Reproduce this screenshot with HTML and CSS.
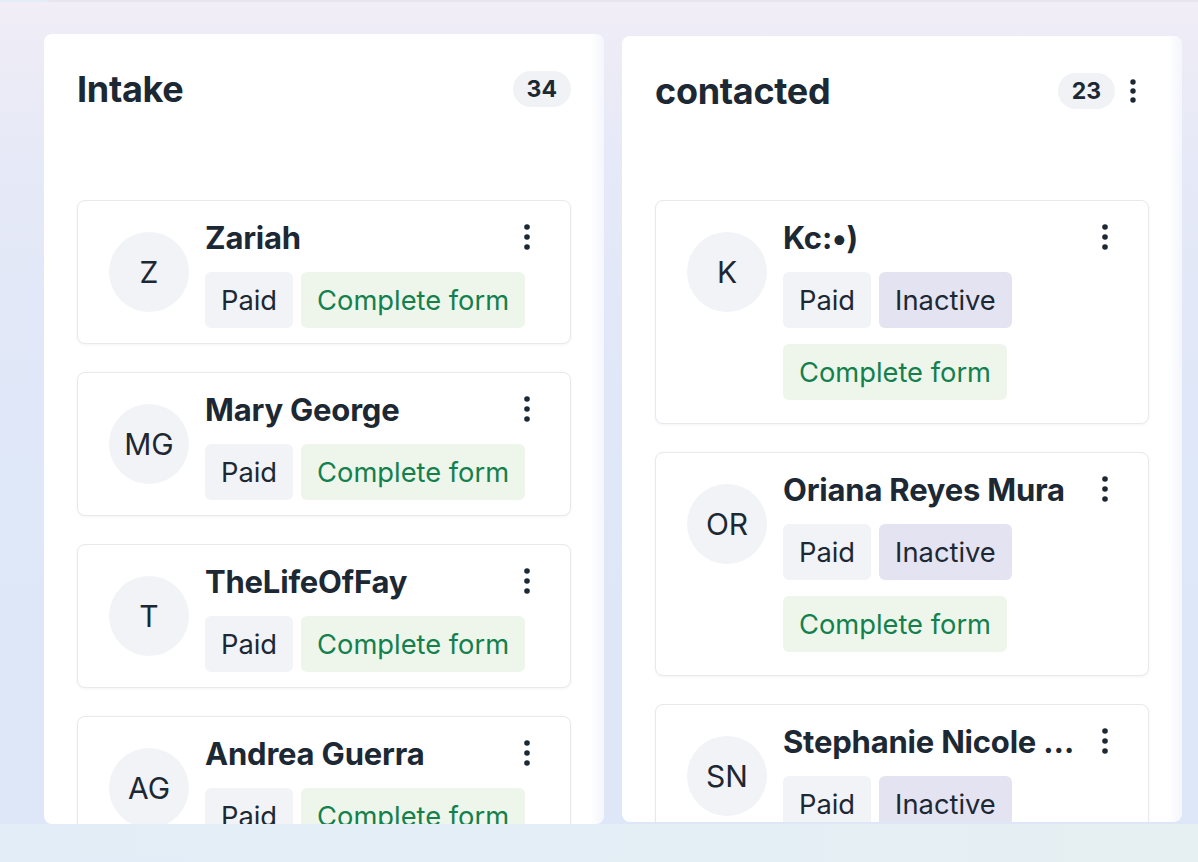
FILE: index.html
```html
<!DOCTYPE html>
<html lang="en">
<head>
<meta charset="utf-8">
<title>Board</title>
<link rel="stylesheet" href="styles.css">
</head>
<body>
<div class="topbar"></div>
<main class="board">
  <section class="col">
    <header class="col-head">
      <h2 class="col-title">Intake</h2>
      <span class="count">34</span>
    </header>
    <div class="cards">
      <article class="card">
        <div class="avatar">Z</div>
        <div class="info">
          <div class="name-row"><span class="name">Zariah</span>
            <svg class="kebab" viewBox="0 0 24 26"><circle cx="12" cy="3" r="2.8"/><circle cx="12" cy="13" r="2.8"/><circle cx="12" cy="23" r="2.8"/></svg></div>
          <div class="tags"><span class="tag tag-paid">Paid</span><span class="tag tag-form">Complete form</span></div>
        </div>
      </article>
      <article class="card">
        <div class="avatar">MG</div>
        <div class="info">
          <div class="name-row"><span class="name">Mary George</span>
            <svg class="kebab" viewBox="0 0 24 26"><circle cx="12" cy="3" r="2.8"/><circle cx="12" cy="13" r="2.8"/><circle cx="12" cy="23" r="2.8"/></svg></div>
          <div class="tags"><span class="tag tag-paid">Paid</span><span class="tag tag-form">Complete form</span></div>
        </div>
      </article>
      <article class="card">
        <div class="avatar">T</div>
        <div class="info">
          <div class="name-row"><span class="name">TheLifeOfFay</span>
            <svg class="kebab" viewBox="0 0 24 26"><circle cx="12" cy="3" r="2.8"/><circle cx="12" cy="13" r="2.8"/><circle cx="12" cy="23" r="2.8"/></svg></div>
          <div class="tags"><span class="tag tag-paid">Paid</span><span class="tag tag-form">Complete form</span></div>
        </div>
      </article>
      <article class="card">
        <div class="avatar">AG</div>
        <div class="info">
          <div class="name-row"><span class="name">Andrea Guerra</span>
            <svg class="kebab" viewBox="0 0 24 26"><circle cx="12" cy="3" r="2.8"/><circle cx="12" cy="13" r="2.8"/><circle cx="12" cy="23" r="2.8"/></svg></div>
          <div class="tags"><span class="tag tag-paid">Paid</span><span class="tag tag-form">Complete form</span></div>
        </div>
      </article>
    </div>
  </section>

  <section class="col col-shifted">
    <header class="col-head">
      <h2 class="col-title">contacted</h2>
      <span class="count">23</span>
      <svg class="col-kebab" viewBox="0 0 32 24"><circle cx="16" cy="3" r="2.7"/><circle cx="16" cy="12" r="2.7"/><circle cx="16" cy="21" r="2.7"/></svg>
    </header>
    <div class="cards">
      <article class="card card-tall">
        <div class="avatar">K</div>
        <div class="info">
          <div class="name-row"><span class="name">Kc:•)</span>
            <svg class="kebab" viewBox="0 0 24 26"><circle cx="12" cy="3" r="2.8"/><circle cx="12" cy="13" r="2.8"/><circle cx="12" cy="23" r="2.8"/></svg></div>
          <div class="tags"><span class="tag tag-paid">Paid</span><span class="tag tag-inactive">Inactive</span><span class="tag tag-form">Complete form</span></div>
        </div>
      </article>
      <article class="card card-tall">
        <div class="avatar">OR</div>
        <div class="info">
          <div class="name-row"><span class="name">Oriana Reyes Mura</span>
            <svg class="kebab" viewBox="0 0 24 26"><circle cx="12" cy="3" r="2.8"/><circle cx="12" cy="13" r="2.8"/><circle cx="12" cy="23" r="2.8"/></svg></div>
          <div class="tags"><span class="tag tag-paid">Paid</span><span class="tag tag-inactive">Inactive</span><span class="tag tag-form">Complete form</span></div>
        </div>
      </article>
      <article class="card card-tall">
        <div class="avatar">SN</div>
        <div class="info">
          <div class="name-row"><span class="name">Stephanie Nicole Williams</span>
            <svg class="kebab" viewBox="0 0 24 26"><circle cx="12" cy="3" r="2.8"/><circle cx="12" cy="13" r="2.8"/><circle cx="12" cy="23" r="2.8"/></svg></div>
          <div class="tags"><span class="tag tag-paid">Paid</span><span class="tag tag-inactive">Inactive</span><span class="tag tag-form">Complete form</span></div>
        </div>
      </article>
    </div>
  </section>
</main>
</body>
</html>
```

FILE: styles.css
```css
* { box-sizing: border-box; }

html, body {
  margin: 0;
  height: 100%;
}

body {
  background: linear-gradient(90deg, #e2edf7 0%, #e4eef5 60%, #e6f0f2 100%);
  font-family: Inter, "Noto Sans", "Liberation Sans", sans-serif;
  color: #1c2833;
  overflow: hidden;
}

.topbar {
  height: 2px;
  margin-left: 47px;
  background: #e8e5ee;
  border-bottom-left-radius: 2px;
}

.board {
  height: 822px;
  display: flex;
  gap: 18px;
  padding: 32px 0 0 44px;
  background:
    linear-gradient(180deg, #f1eef6 0px, #eeecf6 30px, #e6e9f7 160px, #dfe7f8 420px, #dde7f7 822px);
  overflow: hidden;
}

.col {
  flex: 0 0 560px;
  width: 560px;
  background: linear-gradient(90deg, #ffffff calc(100% - 14px), #f4f6fd 100%);
  border-radius: 8px;
  padding: 33px 33px 0;
  overflow: hidden;
}

.col-shifted {
  margin: 2px 0;
}

.col-head {
  display: flex;
  align-items: center;
  height: 44px;
  margin-bottom: 89px;
}

.col-shifted .col-head {
  margin-bottom: 87px;
}

.col-title {
  flex: 1;
  margin: 0;
  font-size: 36px;
  font-weight: 700;
  letter-spacing: -0.3px;
}

.count {
  height: 36px;
  min-width: 56px;
  padding: 0 14px;
  border-radius: 18px;
  background: #f1f2f6;
  font-size: 23px;
  font-weight: 700;
  display: inline-flex;
  align-items: center;
  justify-content: center;
}

.col-kebab {
  width: 32px;
  height: 24px;
  margin-left: 2px;
  fill: #1c2833;
}

.cards {
  display: flex;
  flex-direction: column;
  gap: 28px;
}

.card {
  display: flex;
  align-items: flex-start;
  gap: 16px;
  padding: 15px 31px 15px;
  border: 1px solid #e8e8ed;
  border-radius: 8px;
  background: #fff;
  box-shadow: 0 1px 3px rgba(20, 30, 50, 0.05);
}

.card-tall {
  padding-bottom: 23px;
}

.avatar {
  flex: 0 0 80px;
  width: 80px;
  height: 80px;
  margin-top: 16px;
  border-radius: 50%;
  background: #f2f3f7;
  display: flex;
  align-items: center;
  justify-content: center;
  font-size: 30px;
  color: #1c2833;
}

.info {
  flex: 1;
  min-width: 0;
  display: flex;
  flex-direction: column;
  gap: 8px;
}

.name-row {
  display: flex;
  align-items: center;
  gap: 12px;
  height: 48px;
}

.name {
  flex: 1;
  min-width: 0;
  font-size: 31px;
  font-weight: 700;
  letter-spacing: -0.2px;
  white-space: nowrap;
  overflow: hidden;
  text-overflow: ellipsis;
  position: relative;
  top: -3px;
}

.kebab {
  flex: 0 0 24px;
  width: 24px;
  height: 26px;
  fill: #1c2833;
  position: relative;
  top: -3px;
}

.tags {
  display: flex;
  flex-wrap: wrap;
  gap: 16px 8px;
}

.tag {
  height: 56px;
  padding: 0 16px;
  border-radius: 6px;
  font-size: 27.3px;
  display: inline-flex;
  align-items: center;
}

.tag-paid {
  background: #f2f3f7;
  color: #1c2833;
}

.tag-inactive {
  background: #e4e3f1;
  color: #1c2833;
}

.tag-form {
  background: #eef6ec;
  color: #13804e;
}
```
